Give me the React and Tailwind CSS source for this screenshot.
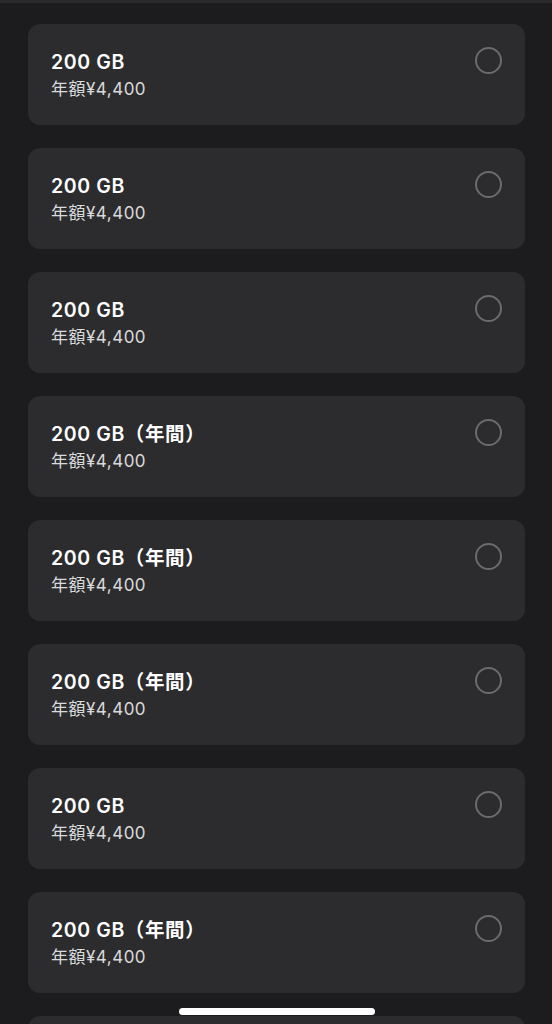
const plans = [
  { title: "200 GB", price: "年額¥4,400" },
  { title: "200 GB", price: "年額¥4,400" },
  { title: "200 GB", price: "年額¥4,400" },
  { title: "200 GB（年間）", price: "年額¥4,400" },
  { title: "200 GB（年間）", price: "年額¥4,400" },
  { title: "200 GB（年間）", price: "年額¥4,400" },
  { title: "200 GB", price: "年額¥4,400" },
  { title: "200 GB（年間）", price: "年額¥4,400" },
];

const PlanCard = ({ title, price }) => (
  <div className="h-[101px] shrink-0 rounded-[12px] bg-[#2c2c2e] pl-[23px] pr-[23px] pt-[26px] flex justify-between items-start">
    <div className="flex flex-col">
      <div className="text-[19.5px] leading-[24px] font-semibold tracking-[0.6px] text-white">{title}</div>
      <div className="text-[17px] leading-[24px] mt-[3px] tracking-[0.5px] text-[#dadadc]">{price}</div>
    </div>
    <div className="w-[27px] h-[27px] rounded-full border-2 border-[#6b6b6e] -mt-[3px]"></div>
  </div>
);

const App = () => {
  return (
    <div
      className="relative w-[552px] h-[1024px] overflow-hidden bg-[#1c1c1e]"
      style={{ fontFamily: '"Inter", "Noto Sans CJK JP", sans-serif' }}
    >
      <div className="h-[3px] bg-[#2a2a2c]"></div>
      <div className="flex flex-col gap-[23px] px-[28px] pt-[21px] w-[553px]">
        {plans.map((p, i) => (
          <PlanCard key={i} title={p.title} price={p.price} />
        ))}
        {/* next card, scrolled below the fold */}
        <div className="h-[101px] shrink-0 rounded-[12px] bg-[#2c2c2e]"></div>
      </div>
      {/* home indicator */}
      <div className="absolute left-[179px] top-[1008px] w-[196px] h-[7px] rounded-full bg-white"></div>
    </div>
  );
};

export default App;
